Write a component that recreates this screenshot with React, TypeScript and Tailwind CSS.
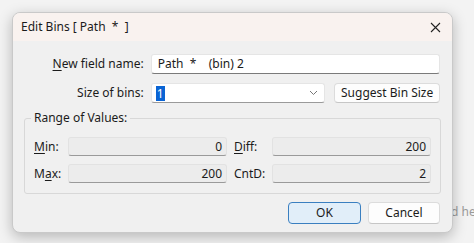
import React from "react";

const font = { fontFamily: '"Noto Sans", "Open Sans", sans-serif' };

function ReadField({ value }: { value: string }) {
  return (
    <div className="h-[19px] w-[159px] rounded-[3px] border border-[#e2e2e2] border-b-[#9a9a9a] bg-[#ececec] flex items-center justify-end pr-[4px] text-[12px] text-[#1b1b1b]">
      {value}
    </div>
  );
}

export default function App() {
  return (
    <div
      className="relative w-[474px] h-[243px] overflow-hidden bg-[#f3f3f3] pl-[12px] pt-[12px]"
      style={font}
    >
      <span className="absolute left-[451px] top-[203px] whitespace-nowrap text-[12px] text-[#9a9a9a]">
        d he
      </span>
      <div className="relative w-[441px] h-[221px] rounded-[8px] border border-[#c9c9c9] bg-[#f0f0f0] shadow-[0_4px_14px_rgba(0,0,0,0.25)] overflow-hidden text-[12px] text-[#1b1b1b]">
        {/* title bar */}
        <div className="h-[28px] bg-[#f9f2ef] flex items-center justify-between pl-[8px] pr-[11px]">
          <span className="text-[12px] whitespace-pre">Edit Bins [ Path  *  ]</span>
          <svg width="11" height="11" viewBox="0 0 11 11" className="mt-[1px]">
            <path d="M1 1 L10 10 M10 1 L1 10" stroke="#222" strokeWidth="1.1" />
          </svg>
        </div>

        <div className="pr-[12px]">
          {/* new field name */}
          <div className="flex items-center mt-[13px] h-[20px]">
            <div className="w-[131px] text-right">
              <span className="underline underline-offset-2">N</span>ew field name:
            </div>
            <div className="ml-[7px] w-[290px] h-[20px] bg-white border border-[#e5e5e5] border-b-[#7a7a7a] rounded-[3px] flex items-center pl-[6px] whitespace-pre">
              Path  *    (bin) 2
            </div>
          </div>

          {/* size of bins */}
          <div className="flex items-center mt-[9px] h-[20px]">
            <div className="w-[131px] text-right">Size of bins:</div>
            <div className="ml-[7px] w-[175px] h-[20px] bg-white border border-[#e5e5e5] border-b-[#9a9a9a] rounded-[3px] flex items-center justify-between pl-[4px] pr-[6px]">
              <span className="bg-[#0a64d4] text-white px-[1px] leading-[15px]">1</span>
              <svg width="9" height="6" viewBox="0 0 9 6">
                <path d="M1 1 L4.5 4.5 L8 1" fill="none" stroke="#777" strokeWidth="1" />
              </svg>
            </div>
            <button className="ml-[9px] w-[106px] h-[20px] bg-[#fdfdfd] border border-[#dcdcdc] border-b-[#c6c6c6] rounded-[4px] flex items-center justify-center">
              Suggest Bin Size
            </button>
          </div>

          {/* group box */}
          <div className="relative ml-[11px] mt-[15px] w-[417px] h-[76px] border border-[#d8d8d8] rounded-[3px]">
            <span className="absolute left-[6px] -top-[9px] bg-[#f0f0f0] px-[3px] leading-[16px]">
              Range of Values:
            </span>
            <div className="flex items-center mt-[18px] pl-[9px]">
              <span className="w-[34px]">
                <span className="underline underline-offset-2">M</span>in:
              </span>
              <ReadField value="0" />
              <span className="ml-[7px] w-[38px]">
                <span className="underline underline-offset-2">D</span>iff:
              </span>
              <ReadField value="200" />
            </div>
            <div className="flex items-center mt-[8px] pl-[9px]">
              <span className="w-[34px]">
                M<span className="underline underline-offset-2">a</span>x:
              </span>
              <ReadField value="200" />
              <span className="ml-[7px] w-[38px]">CntD:</span>
              <ReadField value="2" />
            </div>
          </div>

          {/* buttons */}
          <div className="flex justify-end mt-[8px] gap-[7px]">
            <button className="w-[73px] h-[22px] bg-[#e1eef9] border border-[#3a7fc0] rounded-[4px] flex items-center justify-center">
              OK
            </button>
            <button className="w-[72px] h-[22px] bg-[#fdfdfd] border border-[#dcdcdc] border-b-[#c6c6c6] rounded-[4px] flex items-center justify-center">
              Cancel
            </button>
          </div>
        </div>
      </div>
    </div>
  );
}
